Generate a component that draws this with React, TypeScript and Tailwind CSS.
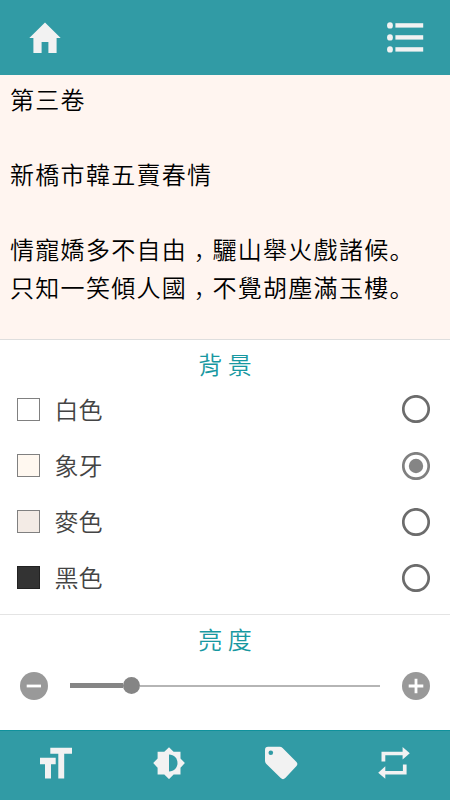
import React, { useState } from "react";

function HomeIcon() {
  return (
    <svg width="32" height="32" viewBox="29 22 32 32" fill="#f2f2f2">
      <path d="M45 22.5L60.7 38H56.6V53H48.4V42H41.6V53H33.4V38H29.3Z" />
    </svg>
  );
}

function ListIcon() {
  return (
    <svg width="38" height="32" viewBox="386 22 38 32" fill="#f2f2f2">
      {[25.4, 37.4, 49.4].map((y) => (
        <g key={y}>
          <ellipse cx="390" cy={y} rx="2.9" ry="3.2" />
          <rect x="395.4" y={y - 2.2} width="27.8" height="4.4" />
        </g>
      ))}
    </svg>
  );
}

function TextSizeIcon() {
  return (
    <svg width="32" height="32" viewBox="40 746.5 32 32" fill="#f2f2f2">
      <path d="M50.3 747.2H72V753.3H64.2V778H58.3V753.3H50.3ZM40 757.3H55.7V763.7H51V778H45V763.7H40Z" />
    </svg>
  );
}

function BrightnessIcon() {
  return (
    <svg width="32" height="32" viewBox="152.7 746.5 32 32">
      <path
        fill="#f2f2f2"
        d="M168.7 746.7L173.3 751.2H180.2V757.9L184.6 762.6L180.2 767.2V774H173.3L168.7 778.6L164 774H157.3V767.2L152.9 762.6L157.3 757.9V751.2H164Z"
      />
      <path fill="#319ba5" d="M168.7 754C173.8 754 177.2 758 177.2 762.5S173.8 771 168.7 771Z" />
    </svg>
  );
}

function TagIcon() {
  return (
    <svg width="34" height="34" viewBox="264 745.5 34 34">
      <path
        fill="#f2f2f2"
        d="M268 746.2H279.7Q281.4 746.2 282.6 747.4L296.5 761.4Q298.2 763.5 296.5 765.5L285.3 777.6Q283 779.7 280.7 777.6L266.4 763.4Q265 762.2 265 760.5V749.4Q265 746.2 268 746.2Z"
      />
      <circle cx="270.8" cy="752.3" r="2.3" fill="#319ba5" />
    </svg>
  );
}

function RepeatIcon() {
  return (
    <svg width="32" height="32" viewBox="377.7 746.5 32 32" fill="#f2f2f2">
      <path d="M381.2 761V751.2H402.3V746.6L409.5 752.8L402.3 759V754.8H385V761ZM406.3 764V774H385V778.3L377.9 772.2L385 765.7V770.4H402.6V764Z" />
    </svg>
  );
}

const shades = [
  { name: "白色", fill: "border-[#808080] bg-white" },
  { name: "象牙", fill: "border-[#808080] bg-[#fff8f0]" },
  { name: "麥色", fill: "border-[#808080] bg-[#f3ebe5]" },
  { name: "黑色", fill: "border-[#222222] bg-[#333333]" },
];

function Comma() {
  return <span className="align-[-8px] leading-none font-light">，</span>;
}

function Stop() {
  return <span className="font-['Noto_Sans_CJK_JP',sans-serif]">。</span>;
}

export default function App() {
  const [selected, setSelected] = useState(1);
  return (
    <div className="flex h-[800px] w-[450px] flex-col overflow-hidden bg-white font-['Noto_Sans_CJK_TC',sans-serif] font-[350]">
      <header className="flex h-[75px] shrink-0 items-center justify-between bg-[#319ba5] pr-[26px] pl-[29px]">
        <button aria-label="home">
          <HomeIcon />
        </button>
        <button aria-label="contents">
          <ListIcon />
        </button>
      </header>

      <main className="h-[264px] shrink-0 bg-[#fff5f0] pt-[5px] pl-[10px] text-[24px] leading-[37.5px] tracking-[1.3px] whitespace-nowrap text-black">
        <p className="h-[75px]">第三卷</p>
        <p className="h-[75px]">新橋市韓五賣春情</p>
        <p className="h-[37.5px]">
          情寵嬌多不自由
          <Comma />
          驪山舉火戲諸候
          <Stop />
        </p>
        <p className="h-[37.5px]">
          只知一笑傾人國
          <Comma />
          不覺胡塵滿玉樓
          <Stop />
        </p>
      </main>

      <section className="h-[275px] shrink-0 border-t border-[#dedede] pt-[6px]">
        <h2 className="h-[35.3px] text-center text-[24px] leading-9 text-[#1798a1]">背 景</h2>
        {shades.map((shade, i) => (
          <button
            key={shade.name}
            onClick={() => setSelected(i)}
            className="flex h-[56.2px] w-full items-center pr-5 pl-[17px]"
          >
            <span className={`size-[23px] border ${shade.fill}`} />
            <span className="mb-[1.2px] ml-[14.5px] text-[24px] leading-9 text-[#444444]">{shade.name}</span>
            <svg className="ml-auto" width="28" height="28" viewBox="0 0 28 28" fill="none">
              <circle cx="14" cy="14" r="12.7" stroke={i === selected ? "#808080" : "#6c6c6c"} strokeWidth="2.7" />
              {i === selected && <circle cx="14" cy="14" r="7.2" fill="#858585" />}
            </svg>
          </button>
        ))}
      </section>

      <section className="h-[116px] shrink-0 border-t border-[#e4e4e4] pt-[6px]">
        <h2 className="h-9 text-center text-[24px] leading-9 text-[#1798a1]">亮 度</h2>
        <div className="flex h-[57px] items-center pr-5 pl-5">
          <svg width="28" height="28" viewBox="0 0 28 28">
            <circle cx="14" cy="14" r="14" fill="#999" />
            <path d="M6.7 14H21" stroke="#fff" strokeWidth="2.8" />
          </svg>
          <div className="ml-[22px] flex w-[310px] items-center">
            <div className="h-[5px] w-[53px] bg-[#858585]" />
            <div className="size-[17px] rounded-full bg-[#858585]" />
            <div className="h-[2px] flex-1 bg-[#b5b5b5]" />
          </div>
          <svg className="ml-auto" width="28" height="28" viewBox="0 0 28 28">
            <circle cx="14" cy="14" r="14" fill="#999" />
            <path d="M6.7 14H21.3M14 6.7V21.3" stroke="#fff" strokeWidth="2.8" />
          </svg>
        </div>
      </section>

      <nav className="grid h-[70px] shrink-0 grid-cols-4 border-t border-[#10919c] bg-[#319ba5] pb-[5px]">
        {[TextSizeIcon, BrightnessIcon, TagIcon, RepeatIcon].map((Icon, i) => (
          <button key={i} className="flex items-center justify-center">
            <Icon />
          </button>
        ))}
      </nav>
    </div>
  );
}
